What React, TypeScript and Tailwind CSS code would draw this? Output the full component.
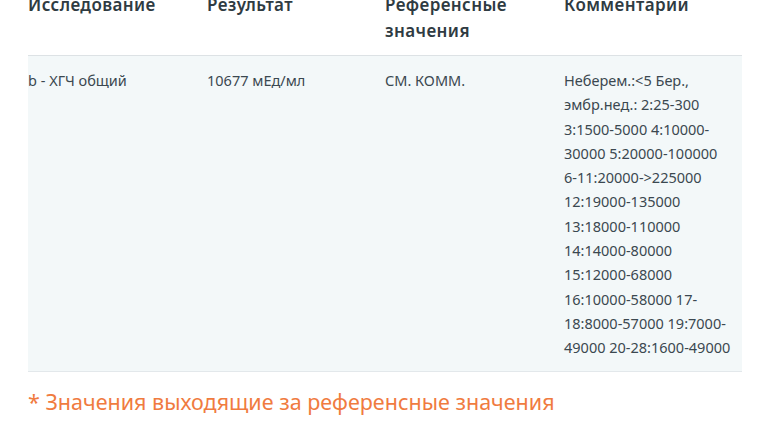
export default function App() {
  const comments = [
    "Неберем.:<5 Бер.,",
    "эмбр.нед.: 2:25-300",
    "3:1500-5000 4:10000-",
    "30000 5:20000-100000",
    "6-11:20000->225000",
    "12:19000-135000",
    "13:18000-110000",
    "14:14000-80000",
    "15:12000-68000",
    "16:10000-58000 17-",
    "18:8000-57000 19:7000-",
    "49000 20-28:1600-49000",
  ];
  return (
    <div className="w-[770px] h-[433px] overflow-hidden bg-white" style={{ fontFamily: '"Noto Sans", sans-serif' }}>
      <div className="-mt-[20px] pl-[28px] w-[742px]">
        <div className="grid grid-cols-[179px_178px_179px_156px] border-b border-[#dde2e5] pt-[12px] pb-[11px] text-[17px] leading-[26px] font-semibold tracking-[0.4px] text-[#2f3b42]">
          <div>Исследование</div>
          <div>Результат</div>
          <div>Референсные<br />значения</div>
          <div>Комментарии</div>
        </div>
        <div className="grid grid-cols-[179px_178px_179px_178px] bg-[#f3f8f9] border-b border-[#e3e8eb] pt-[12px] pb-[11px] text-[14.5px] leading-[24.3px] text-[#3b4850]">
          <div className="whitespace-nowrap">b - ХГЧ общий</div>
          <div className="whitespace-nowrap">10677 мЕд/мл</div>
          <div className="whitespace-nowrap">СМ. КОММ.</div>
          <div>
            {comments.map((c) => (
              <div key={c} className="whitespace-nowrap">{c}</div>
            ))}
          </div>
        </div>
        <div className="mt-[16px] text-[21.5px] leading-[28px] text-[#f07b3f]">
          * Значения выходящие за референсные значения
        </div>
      </div>
    </div>
  );
}
